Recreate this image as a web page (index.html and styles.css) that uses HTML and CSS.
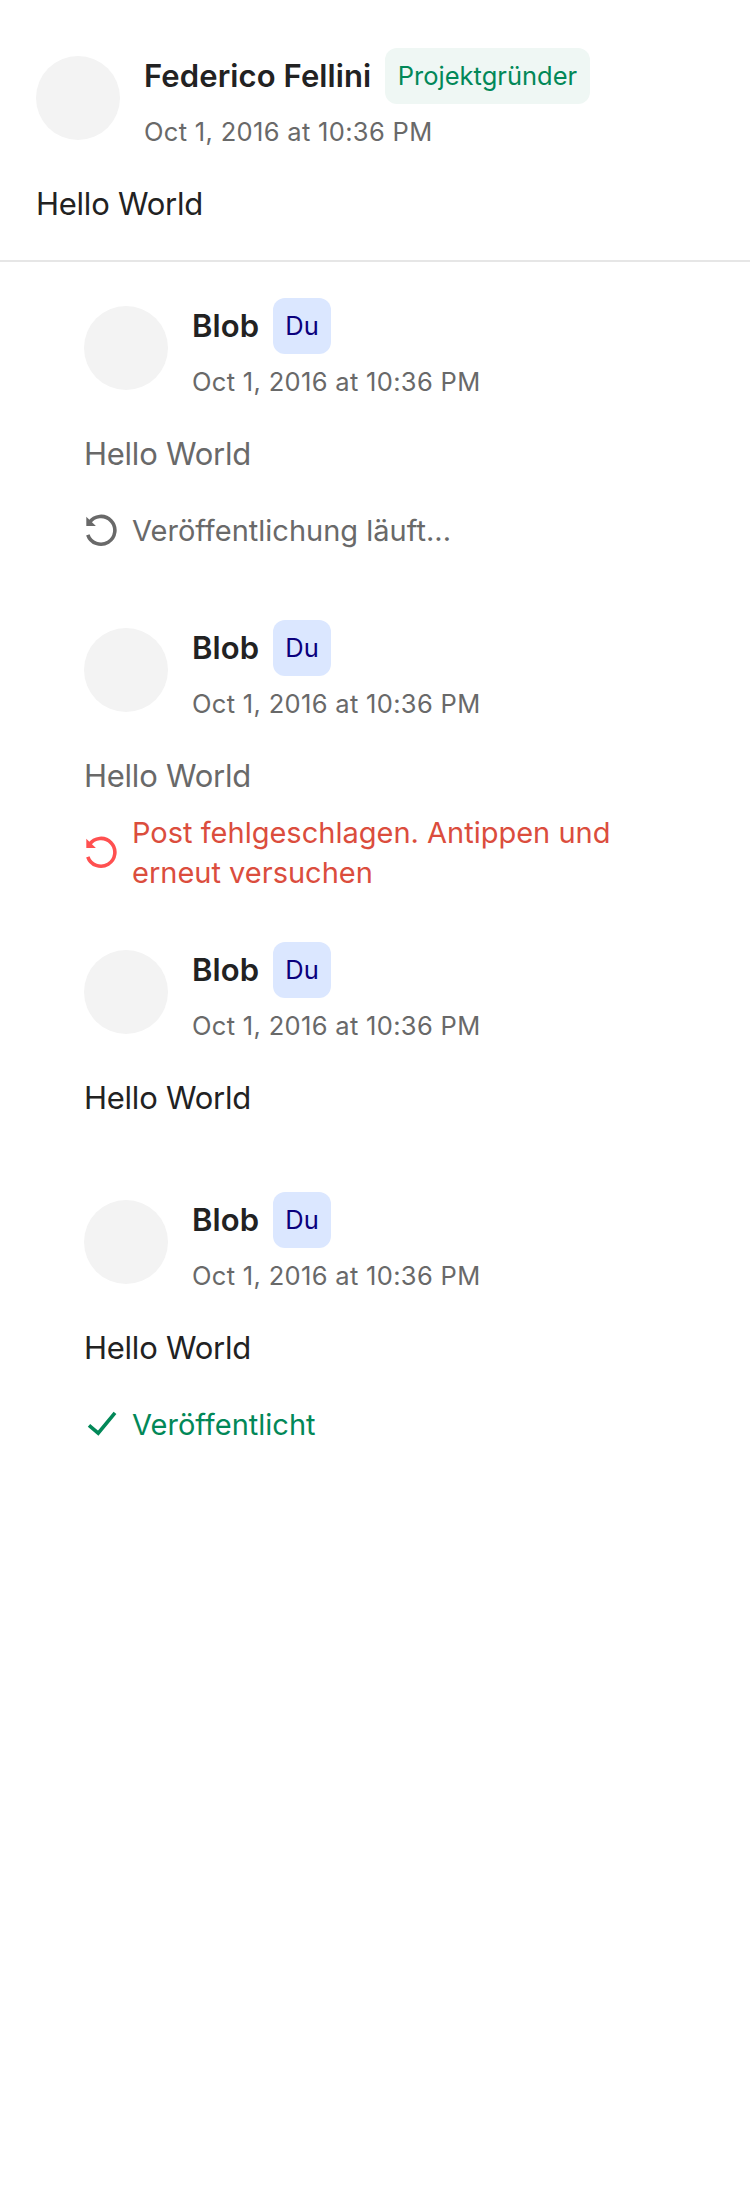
FILE: index.html
```html
<!DOCTYPE html>
<html lang="de">
<head>
<meta charset="utf-8">
<title>Kommentare</title>
<link rel="stylesheet" href="styles.css">
</head>
<body>
<svg width="0" height="0" class="sprite" aria-hidden="true">
  <symbol id="retry" viewBox="0 0 34 34">
    <path d="M5.4 9.6A13.9 13.9 0 1 1 3.8 21.8" fill="none" stroke="currentColor" stroke-width="3.6"/>
    <path d="M2.3 3.7v9.3h9.6z" fill="currentColor"/>
  </symbol>
  <symbol id="check" viewBox="0 0 34 34">
    <path d="M5 18.3l9.2 7.9L31 5.8" fill="none" stroke="currentColor" stroke-width="3.6"/>
  </symbol>
</svg>
<article class="post">
  <header class="author">
    <div class="avatar"></div>
    <div class="meta">
      <div class="name-row"><span class="name name-long">Federico Fellini</span><span class="badge creator">Projektgründer</span></div>
      <time class="date">Oct 1, 2016 at 10:36 PM</time>
    </div>
  </header>
  <p class="body">Hello World</p>
</article>
<section class="comments">
  <article class="comment">
    <header class="author">
      <div class="avatar"></div>
      <div class="meta">
        <div class="name-row"><span class="name">Blob</span><span class="badge you">Du</span></div>
        <time class="date">Oct 1, 2016 at 10:36 PM</time>
      </div>
    </header>
    <p class="body muted">Hello World</p>
    <div class="status pending"><svg class="icon"><use href="#retry"/></svg><span>Veröffentlichung läuft...</span></div>
  </article>
  <article class="comment">
    <header class="author">
      <div class="avatar"></div>
      <div class="meta">
        <div class="name-row"><span class="name">Blob</span><span class="badge you">Du</span></div>
        <time class="date">Oct 1, 2016 at 10:36 PM</time>
      </div>
    </header>
    <p class="body muted">Hello World</p>
    <div class="status failed"><svg class="icon"><use href="#retry"/></svg><span>Post fehlgeschlagen. Antippen und<br>erneut versuchen</span></div>
  </article>
  <article class="comment">
    <header class="author">
      <div class="avatar"></div>
      <div class="meta">
        <div class="name-row"><span class="name">Blob</span><span class="badge you">Du</span></div>
        <time class="date">Oct 1, 2016 at 10:36 PM</time>
      </div>
    </header>
    <p class="body">Hello World</p>
  </article>
  <article class="comment">
    <header class="author">
      <div class="avatar"></div>
      <div class="meta">
        <div class="name-row"><span class="name">Blob</span><span class="badge you">Du</span></div>
        <time class="date">Oct 1, 2016 at 10:36 PM</time>
      </div>
    </header>
    <p class="body">Hello World</p>
    <div class="status posted"><svg class="icon"><use href="#check"/></svg><span>Veröffentlicht</span></div>
  </article>
</section>
</body>
</html>
```
FILE: styles.css
```css
* { box-sizing: border-box; }
body {
  margin: 0;
  min-height: 2200px;
  background: #fff;
  color: #222;
  font-family: Inter, "Liberation Sans", sans-serif;
}
.sprite { display: none; }
.post {
  height: 262px;
  padding: 48px 36px 0;
  border-bottom: 2px solid #e6e6e6;
}
.comments { padding: 0 36px 0 84px; }
.comment { padding-top: 36px; min-height: 250px; }
.author { display: flex; gap: 24px; height: 100px; }
.avatar {
  flex: none;
  width: 84px;
  height: 84px;
  margin-top: 8px;
  border-radius: 50%;
  background: #f3f3f3;
}
.name-row { display: flex; align-items: center; height: 56px; }
.name {
  width: 81px;
  font-size: 31px;
  font-weight: 600;
  line-height: 40px;
  white-space: nowrap;
  letter-spacing: 0.1px;
}
.name-long { width: 241px; }
.badge {
  width: 58px;
  height: 56px;
  border-radius: 12px;
  font-size: 25.5px;
  line-height: 55px;
  text-align: center;
  white-space: nowrap;
}
.creator { width: 205px; background: #eff7f4; color: #028858; }
.you { background: #dbe7ff; color: #0a007d; }
.date {
  display: block;
  margin-top: 12px;
  font-size: 25.5px;
  line-height: 32px;
  letter-spacing: 0.32px;
  color: #696969;
}
.body {
  margin: 36px 0 0;
  font-size: 31px;
  line-height: 40px;
  letter-spacing: -0.25px;
}
.muted { color: #696969; }
.status {
  display: flex;
  align-items: center;
  gap: 14px;
  height: 80px;
  margin: 16px 0 14px;
  font-size: 29px;
  line-height: 40px;
  white-space: nowrap;
}
.status span { padding-top: 1px; margin-bottom: -1px; }
.icon { flex: none; width: 34px; height: 34px; }
.pending { color: #696969; }
.failed { color: #db4d3d; }
.failed .icon { color: #ff5050; }
.posted { color: #028858; }
```
